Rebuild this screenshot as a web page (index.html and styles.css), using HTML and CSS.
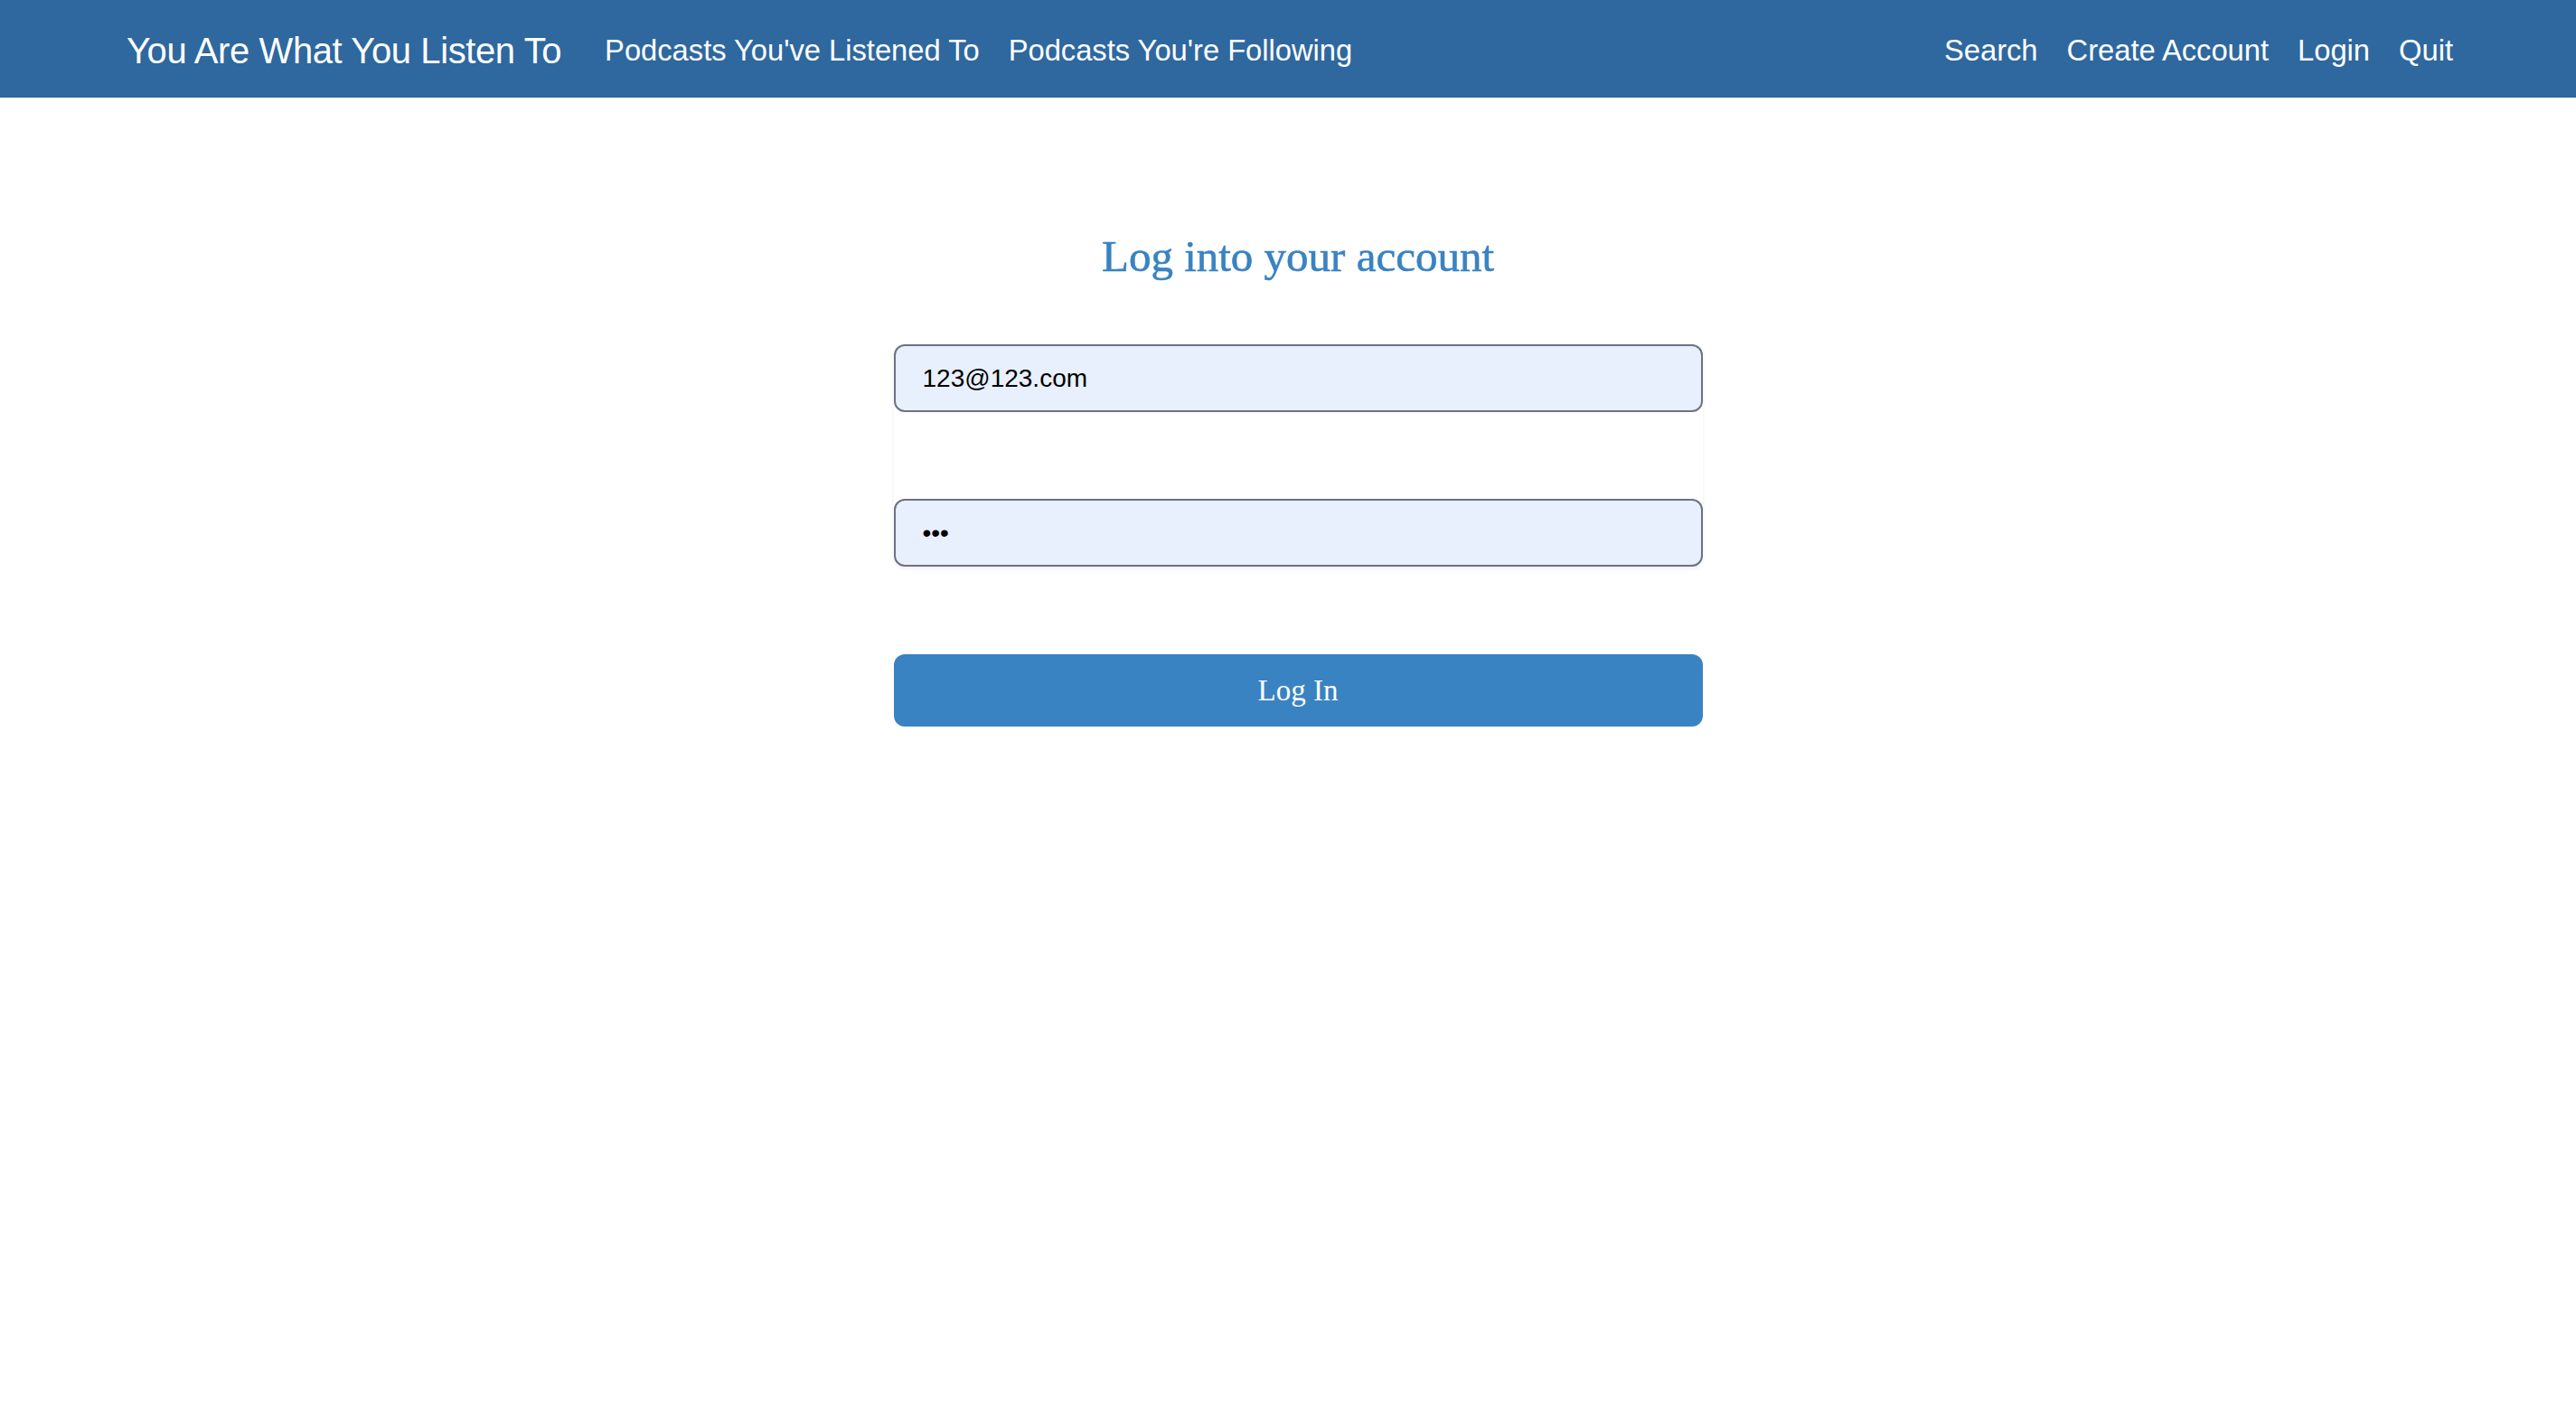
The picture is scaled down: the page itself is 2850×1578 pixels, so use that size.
FILE: index.html
```html
<!DOCTYPE html>
<html lang="en">
<head>
<meta charset="utf-8">
<title>Log In - You Are What You Listen To</title>
<link rel="stylesheet" href="styles.css">
</head>
<body>
<nav class="navbar">
  <a class="brand" href="#">You Are What You Listen To</a>
  <ul class="nav-links">
    <li><a href="#">Podcasts You've Listened To</a></li>
    <li><a href="#">Podcasts You're Following</a></li>
  </ul>
  <ul class="nav-links nav-right">
    <li><a href="#">Search</a></li>
    <li><a href="#">Create Account</a></li>
    <li><a href="#">Login</a></li>
    <li><a href="#">Quit</a></li>
  </ul>
</nav>
<main class="main">
  <div class="login">
    <h1 class="title">Log into your account</h1>
    <form class="form">
      <div class="fields">
        <input class="field" type="email" value="123@123.com" aria-label="Email">
        <input class="field" type="password" value="123" aria-label="Password">
      </div>
      <button class="submit" type="button">Log In</button>
    </form>
  </div>
</main>
</body>
</html>
```

FILE: styles.css
```css
html, body {
  margin: 0;
  padding: 0;
  background: #ffffff;
}

body {
  font-family: "Liberation Sans", Arial, sans-serif;
}

.navbar {
  display: flex;
  align-items: center;
  height: 108px;
  box-sizing: border-box;
  padding: 3px 120px 0 140px;
  background: #2e689e;
}

.brand {
  color: #ffffff;
  text-decoration: none;
  font-size: 40px;
  letter-spacing: -0.4px;
  line-height: 1.15;
  margin-right: 32px;
  white-space: nowrap;
}

.nav-links {
  display: flex;
  list-style: none;
  margin: 0;
  padding: 0;
}

.nav-links a {
  display: block;
  padding: 0 16px;
  color: #ffffff;
  text-decoration: none;
  font-size: 32.7px;
  line-height: 1.15;
  white-space: nowrap;
}

.nav-right {
  margin-left: auto;
}

.main {
  display: flex;
  justify-content: center;
  padding: 148px 0 0 22px;
}

.login {
  width: 895px;
}

.title {
  margin: 0 0 69px;
  text-align: center;
  font-family: "Liberation Serif", "Times New Roman", serif;
  font-weight: normal;
  font-size: 49px;
  line-height: 56px;
  color: #3a83c2;
  -webkit-text-stroke: 0.6px #3a83c2;
}

.form {
  display: flex;
  flex-direction: column;
  margin: 0;
}

.fields {
  display: flex;
  flex-direction: column;
  gap: 96px;
  border-radius: 12px;
  box-shadow: 0 2px 5px rgba(0, 0, 0, 0.07);
}

.field {
  display: block;
  width: 100%;
  height: 75px;
  box-sizing: border-box;
  margin: 0;
  padding: 0 30px;
  border: 2px solid #6c7280;
  border-radius: 12px;
  background: #e8f0fe;
  color: #000000;
  font-family: "Liberation Sans", Arial, sans-serif;
  font-size: 28px;
  outline: none;
}

.submit {
  display: block;
  width: 100%;
  height: 80px;
  margin-top: 97px;
  border: none;
  border-radius: 12px;
  background: #3a83c2;
  color: #ffffff;
  font-family: "Liberation Serif", "Times New Roman", serif;
  font-size: 33px;
  cursor: pointer;
}
```
